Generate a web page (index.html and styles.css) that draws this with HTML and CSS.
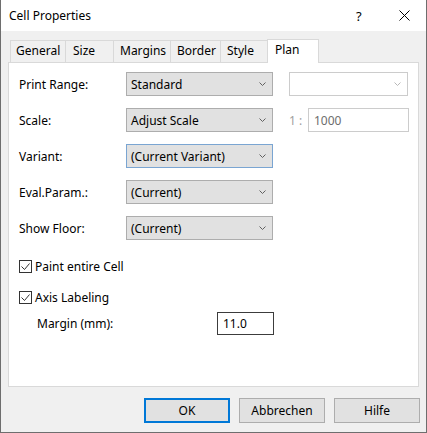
FILE: index.html
```html
<!DOCTYPE html>
<html lang="en">
<head>
<meta charset="utf-8">
<title>Cell Properties</title>
<link rel="stylesheet" href="styles.css">
</head>
<body>
<div class="window">
  <div class="titlebar">
    <span class="title">Cell Properties</span>
    <span class="title-help">?</span>
    <span class="title-close">
      <svg width="11" height="11" viewBox="0 0 11 11"><path d="M0.5 0.5 L10.5 10.5 M10.5 0.5 L0.5 10.5" stroke="#000" stroke-width="1" fill="none"/></svg>
    </span>
  </div>

  <div class="tabs">
    <div class="tab tab-general">General</div>
    <div class="tab tab-size">Size</div>
    <div class="tab tab-margins">Margins</div>
    <div class="tab tab-border">Border</div>
    <div class="tab tab-style">Style</div>
    <div class="tab tab-plan is-active">Plan</div>
  </div>

  <div class="panel">
    <div class="row">
      <span class="label">Print Range:</span>
      <div class="combo"><span class="combo-text">Standard</span><svg class="chev" width="7" height="4" viewBox="0 0 7 4"><path d="M0.5 0.5 L3.5 3.5 L6.5 0.5" stroke="#606060" fill="none"/></svg></div>
      <div class="combo combo-disabled"><span class="combo-text"></span><svg class="chev" width="7" height="4" viewBox="0 0 7 4"><path d="M0.5 0.5 L3.5 3.5 L6.5 0.5" stroke="#b8b8b8" fill="none"/></svg></div>
    </div>
    <div class="row">
      <span class="label">Scale:</span>
      <div class="combo"><span class="combo-text">Adjust Scale</span><svg class="chev" width="7" height="4" viewBox="0 0 7 4"><path d="M0.5 0.5 L3.5 3.5 L6.5 0.5" stroke="#606060" fill="none"/></svg></div>
      <span class="ratio">1 :</span>
      <div class="textbox textbox-disabled">1000</div>
    </div>
    <div class="row">
      <span class="label">Variant:</span>
      <div class="combo combo-focus"><span class="combo-text">(Current Variant)</span><svg class="chev" width="7" height="4" viewBox="0 0 7 4"><path d="M0.5 0.5 L3.5 3.5 L6.5 0.5" stroke="#606060" fill="none"/></svg></div>
    </div>
    <div class="row">
      <span class="label">Eval.Param.:</span>
      <div class="combo"><span class="combo-text">(Current)</span><svg class="chev" width="7" height="4" viewBox="0 0 7 4"><path d="M0.5 0.5 L3.5 3.5 L6.5 0.5" stroke="#606060" fill="none"/></svg></div>
    </div>
    <div class="row">
      <span class="label">Show Floor:</span>
      <div class="combo"><span class="combo-text">(Current)</span><svg class="chev" width="7" height="4" viewBox="0 0 7 4"><path d="M0.5 0.5 L3.5 3.5 L6.5 0.5" stroke="#606060" fill="none"/></svg></div>
    </div>

    <label class="check check-first">
      <span class="box"><svg width="11" height="11" viewBox="0 0 11 11"><path d="M1.5 5.5 L4.5 8.5 L9.5 2.5" stroke="#333" stroke-width="1" fill="none"/></svg></span>
      <span>Paint entire Cell</span>
    </label>
    <label class="check">
      <span class="box"><svg width="11" height="11" viewBox="0 0 11 11"><path d="M1.5 5.5 L4.5 8.5 L9.5 2.5" stroke="#333" stroke-width="1" fill="none"/></svg></span>
      <span>Axis Labeling</span>
    </label>
    <div class="margin-row">
      <span class="margin-label">Margin (mm):</span>
      <div class="textbox textbox-margin">11.0</div>
    </div>
  </div>

  <div class="buttons">
    <button class="btn btn-default">OK</button>
    <button class="btn">Abbrechen</button>
    <button class="btn">Hilfe</button>
  </div>
</div>
</body>
</html>
```
FILE: styles.css
```css
* { box-sizing: border-box; }

html, body {
  margin: 0;
  padding: 0;
}

body {
  width: 427px;
  height: 433px;
  background: #f0f0f0;
  font-family: "Noto Sans", "Liberation Sans", sans-serif;
  font-size: 12px;
  color: #000;
  overflow: hidden;
}

.window {
  width: 427px;
  height: 433px;
  border: 1px solid #6e6e6e;
  border-top: none;
  background: #f0f0f0;
  display: flex;
  flex-direction: column;
}

/* title bar */
.titlebar {
  height: 31px;
  background: #fff;
  display: flex;
  align-items: center;
  padding-left: 8px;
  flex-shrink: 0;
}
.title {
  flex: 1;
  line-height: 16px;
}
.title-help {
  width: 14px;
  margin-right: 29px;
  font-size: 13px;
}
.title-close {
  width: 11px;
  height: 11px;
  margin-right: 16px;
  display: flex;
}

/* tab strip */
.tabs {
  display: flex;
  align-items: flex-end;
  height: 23px;
  margin-top: 8px;
  padding-left: 9px;
  flex-shrink: 0;
}
.tab {
  height: 22px;
  border: 1px solid #d9d9d9;
  border-bottom: none;
  margin-left: -1px;
  padding-left: 5px;
  line-height: 19px;
  background: #f0f0f0;
}
.tab:first-child { margin-left: 0; }
.tab-general { width: 56px; }
.tab-size { width: 49px; padding-left: 7px; }
.tab-margins { width: 58px; padding-left: 6px; }
.tab-border { width: 51px; padding-left: 6px; }
.tab-style { width: 50px; padding-left: 6px; }
.tab.is-active {
  width: 52px;
  height: 24px;
  margin-left: -3px;
  margin-bottom: -1px;
  padding-left: 7px;
  background: #fff;
  line-height: 20px;
  position: relative;
  z-index: 1;
}

/* page */
.panel {
  margin: 0 7px;
  height: 325px;
  background: #fff;
  border: 1px solid #d9d9d9;
  padding: 9px 0 0 10px;
  flex-shrink: 0;
}

.row {
  display: flex;
  align-items: center;
  height: 24px;
  margin-bottom: 12px;
}
.label {
  width: 107px;
}

.combo {
  width: 147px;
  height: 24px;
  border: 1px solid #adadad;
  background: #e1e1e1;
  display: flex;
  align-items: center;
  padding: 0 6px 0 4px;
}
.combo-text {
  flex: 1;
}
.chev { display: block; }
.combo-focus {
  border-color: #7aa5d2;
}
.combo-disabled {
  width: 119px;
  height: 24px;
  margin-left: 16px;
  background: #fff;
  border-color: #cccccc;
}

.ratio {
  margin-left: 16px;
  width: 19px;
  color: #a0a0a0;
}

.textbox {
  height: 24px;
  background: #fff;
  border: 1px solid #7a7a7a;
  display: flex;
  align-items: center;
  padding-left: 5px;
}
.textbox-disabled {
  width: 101px;
  border-color: #cccccc;
  color: #6d6d6d;
}

.check {
  display: flex;
  align-items: center;
  height: 17px;
  gap: 3px;
}
.check-first {
  margin-top: 18px;
  margin-bottom: 14px;
}
.box {
  width: 13px;
  height: 13px;
  border: 1px solid #333;
  background: #fff;
  display: flex;
  align-items: center;
  justify-content: center;
}
.box svg { display: block; }

.margin-row {
  display: flex;
  align-items: center;
  margin-top: 6px;
  padding-left: 18px;
  height: 23px;
}
.margin-label {
  width: 180px;
}
.textbox-margin {
  width: 57px;
  height: 23px;
  border-color: #3c3c3c;
}

/* dialog buttons */
.buttons {
  display: flex;
  justify-content: flex-end;
  gap: 9px;
  margin-top: 11px;
  padding-right: 6px;
}
.btn {
  width: 86px;
  height: 25px;
  background: #e1e1e1;
  border: 1px solid #adadad;
  font-family: inherit;
  font-size: 12px;
  color: #000;
  padding: 0;
  margin: 0;
}
.btn-default {
  border: 2px solid #0078d7;
}
```
